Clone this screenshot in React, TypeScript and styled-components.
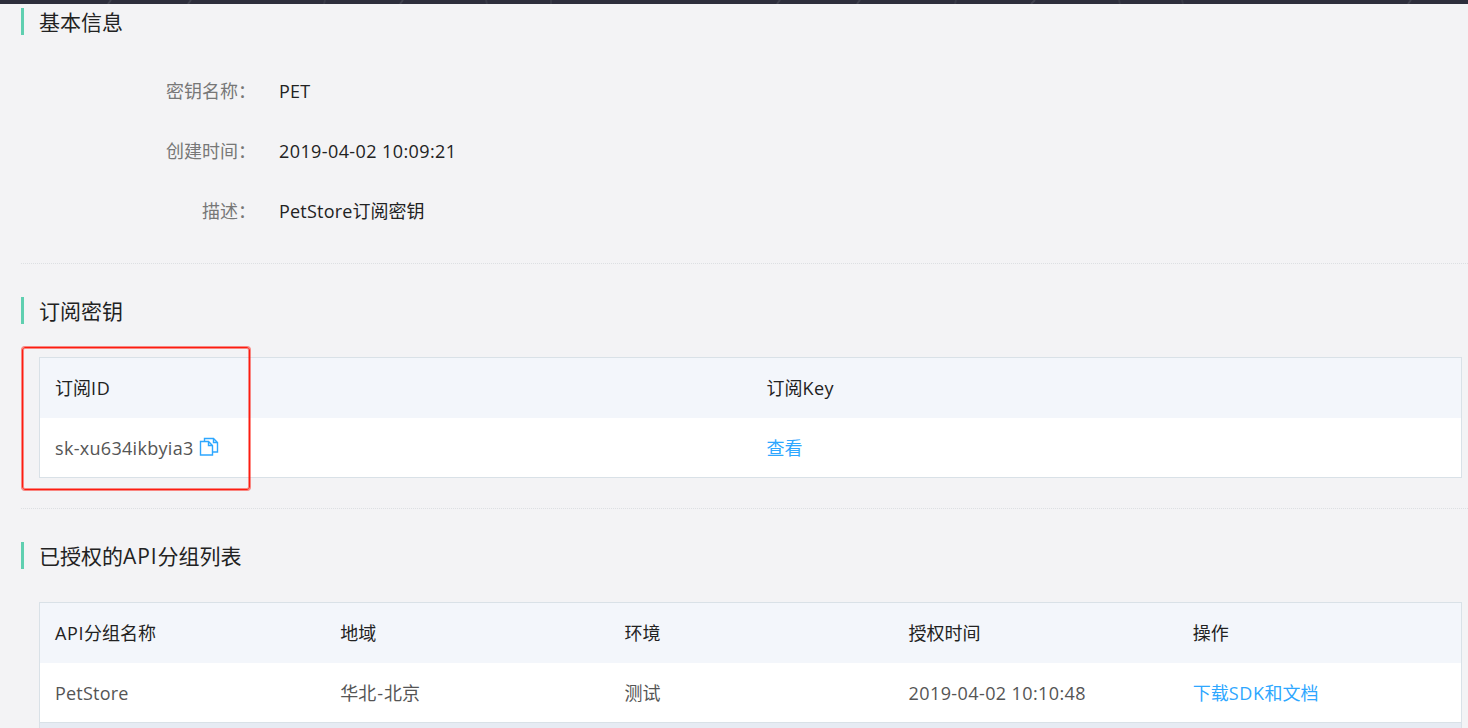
import React from "react";
import styled, { createGlobalStyle } from "styled-components";

const GlobalStyle = createGlobalStyle`
  * { box-sizing: border-box; }
  body {
    margin: 0;
    height: 728px;
    overflow: hidden;
    background: #f3f3f5;
    color: #222;
    font: 18px/60px "Open Sans", "Noto Sans CJK SC", sans-serif;
  }
`;

const Page = styled.div`
  height: 728px;
  overflow: hidden;
`;

const TopBar = styled.div`
  height: 4px;
  background: #2d2e3c;
`;

const Streaks = styled.svg`
  display: block;
`;

const Section = styled.section<{ $top: number; $bottom?: number; $line?: boolean }>`
  margin-left: 21px;
  padding-top: ${(p) => p.$top}px;
  padding-bottom: ${(p) => p.$bottom ?? 0}px;
  border-bottom: ${(p) => (p.$line ? "1px dotted #dcdfe2" : "none")};
`;

const Title = styled.h2`
  margin: 0;
  height: 27px;
  padding-left: 15px;
  border-left: 3px solid #5fcfb0;
  font-size: 21px;
  font-weight: 400;
  line-height: 28px;
`;

const Fields = styled.dl`
  margin: 26px 0 0;
`;

const Field = styled.div`
  display: flex;
  height: 60px;
`;

const Label = styled.dt`
  width: 235px;
  text-align: right;
  color: #777;
`;

const Value = styled.dd`
  margin: 0 0 0 23px;
`;

const Latin = styled.span<{ $ls: number }>`
  letter-spacing: ${(p) => p.$ls}px;
`;

const Hyphen = styled.span`
  margin: 0 1px;
`;

const Table = styled.div<{ $top: number }>`
  position: relative;
  margin: ${(p) => p.$top}px 6px 0 18px;
  border: 1px solid #d9e1e7;
  background: #fff;
`;

const Row = styled.div<{ $cols: number; $head?: boolean }>`
  display: grid;
  grid-template-columns: repeat(${(p) => p.$cols}, 1fr);
  height: ${(p) => (p.$head ? 60 : 59)}px;
  background: ${(p) => (p.$head ? "#f3f6fb" : "#fff")};
  color: ${(p) => (p.$head ? "#222" : "#555")};
`;

const Cell = styled.div`
  display: flex;
  align-items: center;
  padding-left: 16px;
  white-space: nowrap;

  &:first-child {
    padding-left: 15px;
  }
`;

const Link = styled.a`
  color: #2ea7ff;
`;

const CopyIcon = styled.svg`
  margin-left: 5px;
  margin-top: -3px;
`;

const Highlight = styled.div`
  position: absolute;
  left: -18px;
  top: -11px;
  width: 228px;
  height: 143px;
  border: 1px solid #fd1c10;
  border-radius: 3px;
  box-shadow: 0 0 0 1px rgba(253, 28, 16, 0.5), inset 0 0 0 1px rgba(253, 28, 16, 0.5);
`;

const TableFooter = styled.div`
  height: 40px;
  border-top: 1px solid #d9e1e7;
  background: #e6ebf3;
`;

export default function App() {
  return (
    <Page>
      <GlobalStyle />
      <TopBar>
        <Streaks width="1468" height="4" stroke="#40424e" strokeWidth="2">
          <path d="M108 4l3-4M188 4l3-4M400 4l3-4M777 4l3-4M857 4l3-4M1031 4l4-4M1408 4l3-4" />
          <path d="M324 4l1-4M486 0l1 4M551 0v4M955 4l1-4M1119 0l1 4M1182 0l1 4" opacity="0.6" />
        </Streaks>
      </TopBar>
      <Section $top={4} $bottom={22} $line>
        <Title>基本信息</Title>
        <Fields>
          <Field>
            <Label>密钥名称：</Label>
            <Value><Latin $ls={0.2}>PET</Latin></Value>
          </Field>
          <Field>
            <Label>创建时间：</Label>
            <Value><Latin $ls={0.4}>2019-04-02 10:09:21</Latin></Value>
          </Field>
          <Field>
            <Label>描述：</Label>
            <Value><Latin $ls={0.2}>PetStore</Latin>订阅密钥</Value>
          </Field>
        </Fields>
      </Section>
      <Section $top={33} $bottom={30} $line>
        <Title>订阅密钥</Title>
        <Table $top={33}>
          <Row $cols={2} $head>
            <Cell>订阅<Latin $ls={0.6}>ID</Latin></Cell>
            <Cell>订阅<Latin $ls={0.4}>Key</Latin></Cell>
          </Row>
          <Row $cols={2}>
            <Cell>
              <Latin $ls={0.3}>sk-xu634ikbyia3</Latin>
              <CopyIcon width="20" height="20" viewBox="0 0 20 20" fill="none" stroke="#2ea7ff" strokeWidth="1.4">
                <path d="M1.5 4.5h8l4 4v9.5h-12zM9.5 4.5v4h4" />
                <path d="M5.5 4.5v-3h9l4 4v9.5h-5M14.5 1.5v4h4" />
              </CopyIcon>
            </Cell>
            <Cell><Link>查看</Link></Cell>
          </Row>
          <Highlight />
        </Table>
      </Section>
      <Section $top={33}>
        <Title>已授权的<Latin $ls={0.9}>API</Latin>分组列表</Title>
        <Table $top={33}>
          <Row $cols={5} $head>
            <Cell><Latin $ls={0.6}>API</Latin>分组名称</Cell>
            <Cell>地域</Cell>
            <Cell>环境</Cell>
            <Cell>授权时间</Cell>
            <Cell>操作</Cell>
          </Row>
          <Row $cols={5}>
            <Cell><Latin $ls={0.2}>PetStore</Latin></Cell>
            <Cell>华北<Hyphen>-</Hyphen>北京</Cell>
            <Cell>测试</Cell>
            <Cell><Latin $ls={0.4}>2019-04-02 10:10:48</Latin></Cell>
            <Cell><Link>下载<Latin $ls={0.6}>SDK</Latin>和文档</Link></Cell>
          </Row>
          <TableFooter />
        </Table>
      </Section>
    </Page>
  );
}
